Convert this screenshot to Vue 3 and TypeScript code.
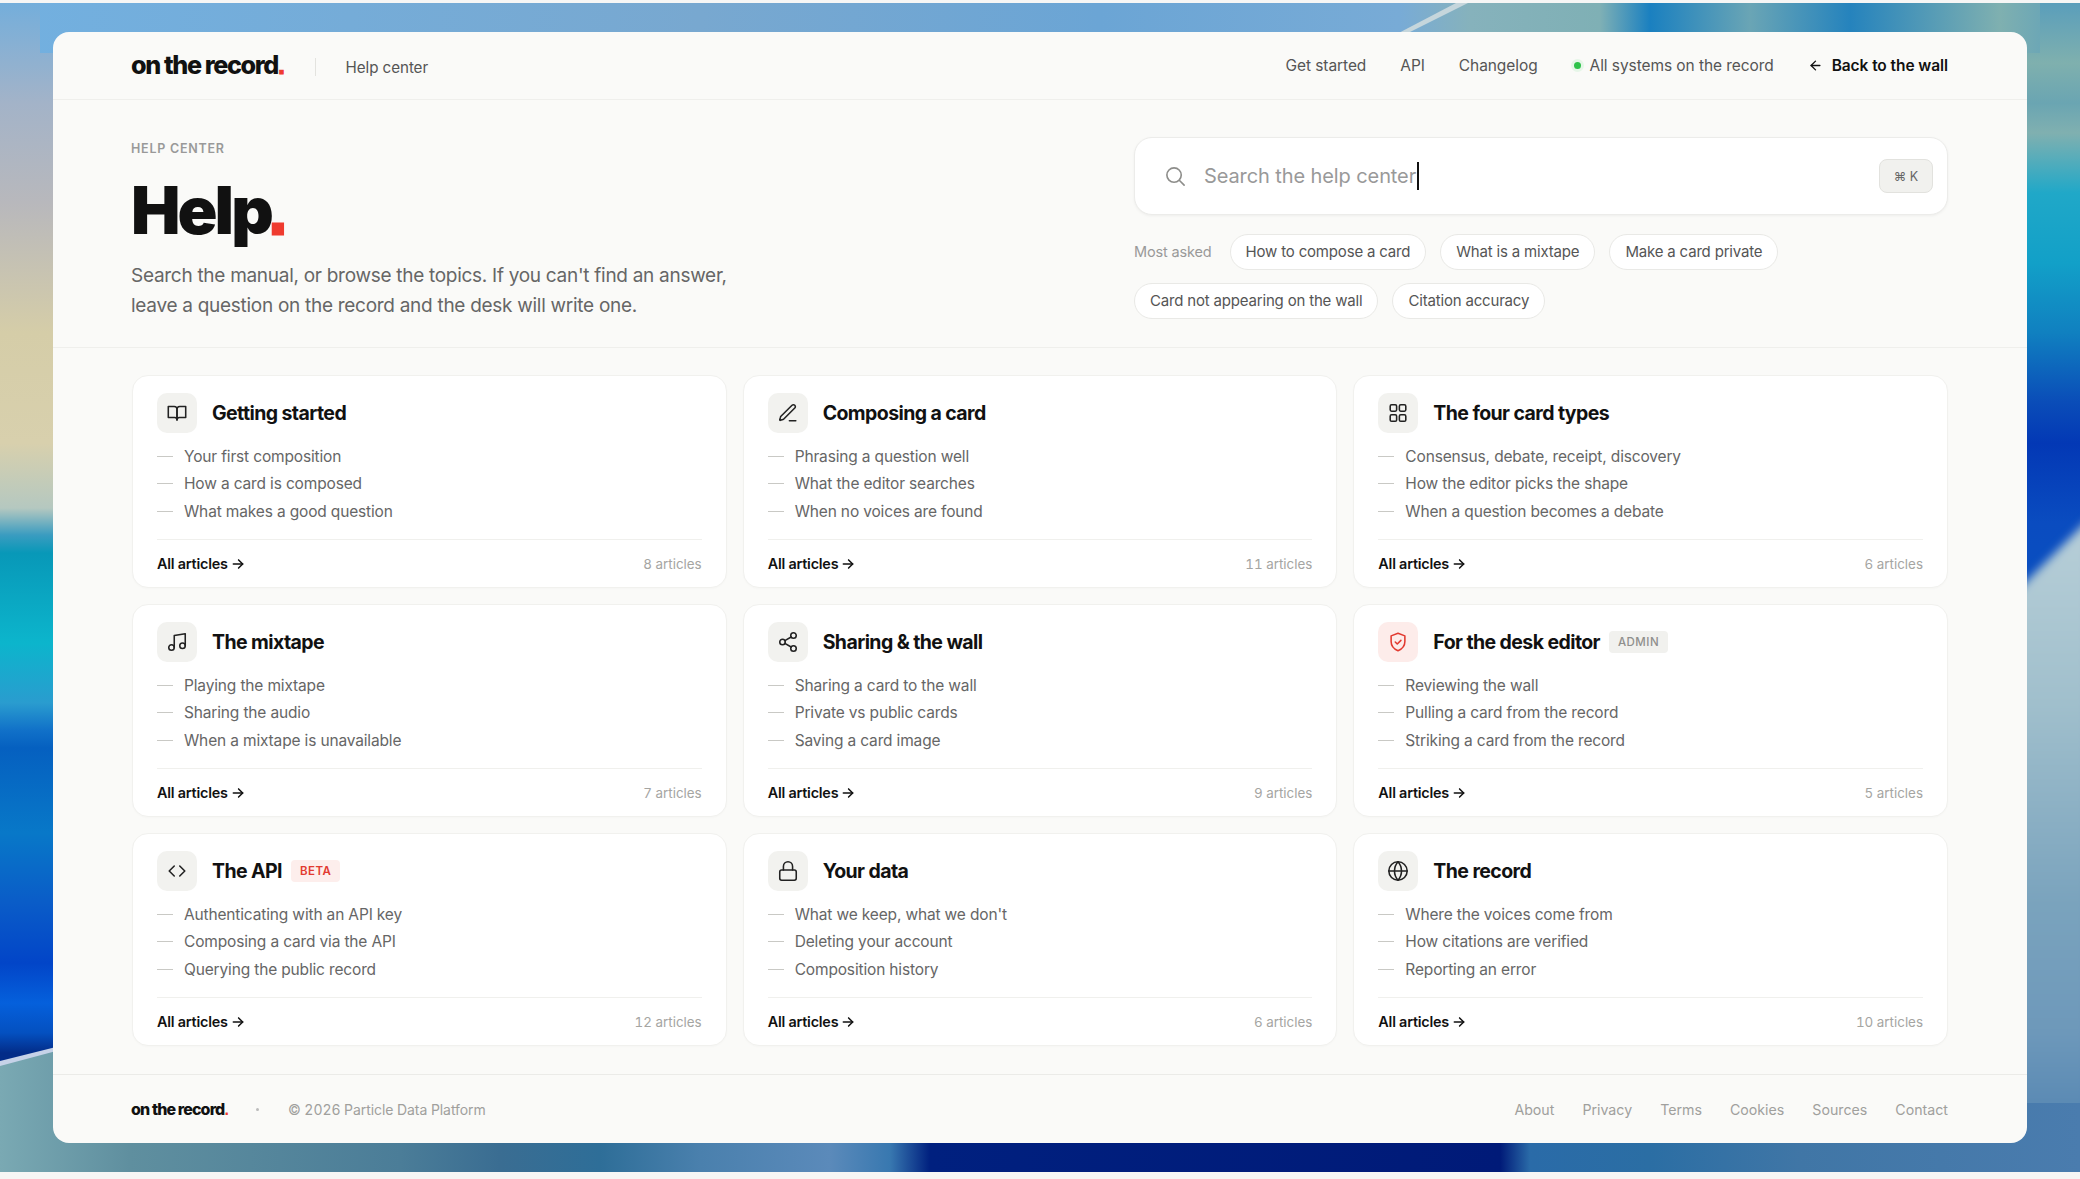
<script setup lang="ts">
interface Topic {
  title: string
  icon: string[]
  articles: string[]
  count: string
  badge?: 'beta' | 'admin'
  danger?: boolean
}

const navLinks = ['Get started', 'API', 'Changelog']
const chips = ['How to compose a card', 'What is a mixtape', 'Make a card private', 'Card not appearing on the wall', 'Citation accuracy']
const footerLinks = ['About', 'Privacy', 'Terms', 'Cookies', 'Sources', 'Contact']

const ring = (cx: number, cy: number, r: number) => `M${cx - r} ${cy}a${r} ${r} 0 1 0 ${r * 2} 0a${r} ${r} 0 1 0 ${-r * 2} 0`
const box = (x: number, y: number) => `M${x + 1.5} ${y}h4a1.5 1.5 0 0 1 1.5 1.5v4a1.5 1.5 0 0 1-1.5 1.5h-4a1.5 1.5 0 0 1-1.5-1.5v-4a1.5 1.5 0 0 1 1.5-1.5z`

const topics: Topic[] = [
  {
    title: 'Getting started',
    icon: ['M2.5 5h6.5a3 3 0 0 1 3 3v11.5a2.5 2.5 0 0 0-2.5-2.5H2.5z', 'M21.5 5H15a3 3 0 0 0-3 3v11.5a2.5 2.5 0 0 1 2.5-2.5h7z'],
    articles: ['Your first composition', 'How a card is composed', 'What makes a good question'],
    count: '8 articles',
  },
  {
    title: 'Composing a card',
    icon: ['M13.5 20.5h7', 'M16.4 3.6a2.1 2.1 0 0 1 3 3L7.4 18.6a2 2 0 0 1-.9.5l-2.9.9a.5.5 0 0 1-.6-.6l.8-2.9a2 2 0 0 1 .5-.9z'],
    articles: ['Phrasing a question well', 'What the editor searches', 'When no voices are found'],
    count: '11 articles',
  },
  {
    title: 'The four card types',
    icon: [box(3.5, 3), box(13.5, 3), box(3.5, 14), box(13.5, 14)],
    articles: ['Consensus, debate, receipt, discovery', 'How the editor picks the shape', 'When a question becomes a debate'],
    count: '6 articles',
  },
  {
    title: 'The mixtape',
    icon: ['M9 18V5l12-2v13', ring(6, 18, 3), ring(18, 16, 3)],
    articles: ['Playing the mixtape', 'Sharing the audio', 'When a mixtape is unavailable'],
    count: '7 articles',
  },
  {
    title: 'Sharing & the wall',
    icon: [ring(18, 5, 3), ring(6, 12, 3), ring(18, 19, 3), 'M8.6 13.5l6.8 4', 'M15.4 6.5l-6.8 4'],
    articles: ['Sharing a card to the wall', 'Private vs public cards', 'Saving a card image'],
    count: '9 articles',
  },
  {
    title: 'For the desk editor',
    icon: ['M12 2.5l7.5 2.8v6.2c0 4.6-3.1 8.2-7.5 10-4.4-1.8-7.5-5.4-7.5-10V5.3z', 'M9 12l2.2 2.2 4-4'],
    articles: ['Reviewing the wall', 'Pulling a card from the record', 'Striking a card from the record'],
    count: '5 articles',
    badge: 'admin',
    danger: true,
  },
  {
    title: 'The API',
    icon: ['M9 6.5L3.5 12 9 17.5', 'M15 6.5l5.5 5.5-5.5 5.5'],
    articles: ['Authenticating with an API key', 'Composing a card via the API', 'Querying the public record'],
    count: '12 articles',
    badge: 'beta',
  },
  {
    title: 'Your data',
    icon: ['M5 11h14a2 2 0 0 1 2 2v7a2 2 0 0 1-2 2H5a2 2 0 0 1-2-2v-7a2 2 0 0 1 2-2z', 'M7 11V7a5 5 0 0 1 10 0v4'],
    articles: ['What we keep, what we don\'t', 'Deleting your account', 'Composition history'],
    count: '6 articles',
  },
  {
    title: 'The record',
    icon: [ring(12, 12, 10), 'M2 12h20', 'M12 2a15 15 0 0 1 0 20a15 15 0 0 1 0-20'],
    articles: ['Where the voices come from', 'How citations are verified', 'Reporting an error'],
    count: '10 articles',
  },
]

const leftStops = [
  [0, '#74aedb'], [100, '#a3b3c8'], [200, '#b8b8bc'], [330, '#d5cda8'], [440, '#d8d0ad'], [505, '#b5c8c0'],
  [532, '#3a9cc0'], [550, '#0898b8'], [640, '#0cb5cc'], [700, '#2a9ccf'], [728, '#1070c8'], [745, '#0560c0'],
  [830, '#0878c8'], [900, '#0a5cc8'], [960, '#0245c8'], [1000, '#0560dc'], [1030, '#0450c0'], [1050, '#032c88'],
]
const rightStops = [
  [0, '#5a9ebb'], [60, '#7fb0ae'], [100, '#6aa5b2'], [130, '#80b0b0'], [190, '#20a8c8'], [260, '#12a0c8'],
  [330, '#1080c0'], [400, '#0a4cb8'], [440, '#0338b5'], [520, '#0a4cc0'], [620, '#0a50c0'],
]
const rightLowStops = [[515, '#b8cfd8'], [700, '#a0bfcc'], [900, '#7aa3bd'], [1030, '#6d98ba'], [1169, '#4a7dae']]
const topStops = [
  [0, '#72b0e0'], [700, '#78a8d0'], [1100, '#6ba5d5'], [1400, '#78abd6'], [1470, '#86b2bc'], [1600, '#7fb0b5'],
  [1650, '#1a80c0'], [1750, '#6aa5b5'], [1850, '#2583bd'], [2000, '#7fb0b0'], [2080, '#5a9ebb'],
]
const bottomStops = [
  [0, '#7aa9b3'], [130, '#5f8f9f'], [400, '#4b7d98'], [500, '#3a6d92'], [600, '#2e6e98'], [700, '#4a80ad'],
  [830, '#5b8aba'], [890, '#3878b0'], [930, '#00207f'], [1500, '#001a78'], [1530, '#2a6ba8'], [1650, '#2b6ea4'],
  [1800, '#4076a6'], [2080, '#4a7cae'],
]
</script>

<template>
  <div class="page">
    <svg class="wallpaper" width="2080" height="1169" viewBox="0 0 2080 1169" preserveAspectRatio="none">
      <defs>
        <linearGradient id="wp-left" gradientUnits="userSpaceOnUse" x1="0" y1="0" x2="0" y2="1169">
          <stop v-for="s in leftStops" :key="s[0]" :offset="Number(s[0]) / 1169" :stop-color="String(s[1])" />
        </linearGradient>
        <linearGradient id="wp-right" gradientUnits="userSpaceOnUse" x1="0" y1="0" x2="0" y2="1169">
          <stop v-for="s in rightStops" :key="s[0]" :offset="Number(s[0]) / 1169" :stop-color="String(s[1])" />
        </linearGradient>
        <linearGradient id="wp-right-low" gradientUnits="userSpaceOnUse" x1="0" y1="0" x2="0" y2="1169">
          <stop v-for="s in rightLowStops" :key="s[0]" :offset="Number(s[0]) / 1169" :stop-color="String(s[1])" />
        </linearGradient>
        <linearGradient id="wp-top" gradientUnits="userSpaceOnUse" x1="0" y1="0" x2="2080" y2="0">
          <stop v-for="s in topStops" :key="s[0]" :offset="Number(s[0]) / 2080" :stop-color="String(s[1])" />
        </linearGradient>
        <linearGradient id="wp-bottom" gradientUnits="userSpaceOnUse" x1="0" y1="0" x2="2080" y2="0">
          <stop v-for="s in bottomStops" :key="s[0]" :offset="Number(s[0]) / 2080" :stop-color="String(s[1])" />
        </linearGradient>
      </defs>
      <rect x="0" y="0" width="80" height="1169" fill="url(#wp-left)" />
      <rect x="2000" y="0" width="80" height="1169" fill="url(#wp-right)" />
      <polygon class="soft" points="2000,605 2090,515 2090,1179 2000,1179" fill="url(#wp-right-low)" />
      <rect x="40" y="0" width="2000" height="50" fill="url(#wp-top)" />
      <polygon points="0,1060 80,1040 80,1169 0,1169" fill="url(#wp-bottom)" />
      <rect x="40" y="1100" width="2040" height="69" fill="url(#wp-bottom)" />
      <polygon points="0,1058 60,1043 60,1047 0,1063" fill="#c6d2e8" />
      <polygon points="1391,34 1456,0 1468,0 1400,34" fill="#c5d6dc" />
    </svg>

    <div class="panel">
      <header class="topbar">
        <div class="topbar-left">
          <span class="logo">on the record<i>.</i></span>
          <span class="topbar-sep" />
          <span class="topbar-section">Help center</span>
        </div>
        <nav class="topnav">
          <a v-for="link in navLinks" :key="link">{{ link }}</a>
          <span class="status"><span class="status-dot" />All systems on the record</span>
          <a class="back">
            <svg width="15" height="15" viewBox="0 0 24 24" fill="none" stroke="currentColor" stroke-width="2.2" stroke-linecap="round" stroke-linejoin="round"><path d="M19 12H5" /><path d="M12 19l-7-7 7-7" /></svg>
            Back to the wall
          </a>
        </nav>
      </header>

      <section class="hero">
        <div class="hero-copy">
          <div class="eyebrow">HELP CENTER</div>
          <h1>Help<i>.</i></h1>
          <p>Search the manual, or browse the topics. If you can't find an answer,<br>leave a question on the record and the desk will write one.</p>
        </div>
        <div class="hero-search">
          <div class="searchbox">
            <svg class="search-icon" width="23" height="23" viewBox="0 0 24 24" fill="none" stroke="#8d8d8a" stroke-width="1.7" stroke-linecap="round"><circle cx="10.5" cy="10.5" r="7.5" /><path d="M16.2 16.2L21 21" /></svg>
            <span class="placeholder">Search the help center</span>
            <span class="caret" />
            <kbd>⌘ K</kbd>
          </div>
          <div class="chips">
            <span class="chips-label">Most asked</span>
            <a v-for="chip in chips" :key="chip" class="chip">{{ chip }}</a>
          </div>
        </div>
      </section>

      <section class="topics">
        <article v-for="topic in topics" :key="topic.title" class="card">
          <div class="card-head">
            <span class="card-icon" :class="{ danger: topic.danger }">
              <svg width="22" height="22" viewBox="0 0 24 24" fill="none" stroke="currentColor" stroke-width="1.7" stroke-linecap="round" stroke-linejoin="round">
                <path v-for="d in topic.icon" :key="d" :d="d" />
              </svg>
            </span>
            <h2>{{ topic.title }}</h2>
            <span v-if="topic.badge" class="badge" :class="topic.badge">{{ topic.badge.toUpperCase() }}</span>
          </div>
          <ul>
            <li v-for="item in topic.articles" :key="item">{{ item }}</li>
          </ul>
          <div class="card-foot">
            <a class="all">All articles
              <svg width="14" height="14" viewBox="0 0 24 24" fill="none" stroke="currentColor" stroke-width="2.6" stroke-linecap="round" stroke-linejoin="round"><path d="M4 12h16" /><path d="M13 5l7 7-7 7" /></svg>
            </a>
            <span class="count">{{ topic.count }}</span>
          </div>
        </article>
      </section>

      <footer class="footer">
        <div class="footer-left">
          <span class="logo small">on the record<i>.</i></span>
          <span class="footer-dot" />
          <span class="copyright">© 2026 Particle Data Platform</span>
        </div>
        <nav class="footer-links">
          <a v-for="link in footerLinks" :key="link">{{ link }}</a>
        </nav>
      </footer>
    </div>
  </div>
</template>

<style>
html, body {
  margin: 0;
  background: #f6f6f5;
}
</style>

<style scoped>
.page {
  position: relative;
  width: 2080px;
  height: 1179px;
  box-sizing: border-box;
  padding: 32px 53px 0;
  overflow: hidden;
  font-family: Inter, "Liberation Sans", sans-serif;
  color: #111;
}
.wallpaper {
  position: absolute;
  top: 3px;
  left: 0;
}
.soft { filter: blur(5px); }
.panel {
  position: relative;
  height: 1111px;
  display: flex;
  flex-direction: column;
  background: #fafaf8;
  border-radius: 16px;
}
i {
  font-style: normal;
  font-family: "Liberation Sans", sans-serif;
  font-weight: 700;
  color: #ef3b2f;
}
a { cursor: pointer; }

/* top bar */
.topbar {
  height: 68px;
  flex-shrink: 0;
  box-sizing: border-box;
  display: flex;
  align-items: center;
  justify-content: space-between;
  padding: 0 79px 0 78px;
  border-bottom: 1px solid #efefec;
}
.topbar-left { display: flex; align-items: center; }
.logo {
  font-size: 25.2px;
  font-weight: 800;
  letter-spacing: -0.055em;
  color: #111;
  margin-top: -2px;
}
.logo i { -webkit-text-stroke: 1px #ef3b2f; }
.logo.small { font-size: 16px; margin-top: 0; }
.logo.small i { -webkit-text-stroke: 0; }
.topbar-sep { width: 1px; height: 18px; background: #e3e3df; margin: 2px 30px 0 31px; }
.topbar-section { font-size: 15.2px; color: #555; letter-spacing: -0.005em; margin-top: 4px; }
.topnav {
  display: flex;
  align-items: center;
  gap: 34px;
  font-size: 15.5px;
  color: #555;
  letter-spacing: -0.005em;
}
.status { display: flex; align-items: center; gap: 9px; margin-left: 2px; }
.status-dot {
  width: 7px;
  height: 7px;
  border-radius: 50%;
  background: #2ec24a;
  box-shadow: 0 0 0 3px #e6f6e8;
}
.back {
  display: flex;
  align-items: center;
  gap: 9px;
  color: #111;
  font-weight: 600;
}

/* hero */
.hero {
  height: 248px;
  flex-shrink: 0;
  box-sizing: border-box;
  display: flex;
  justify-content: space-between;
  padding: 37px 79px 0 78px;
  border-bottom: 1px solid #efefec;
}
.eyebrow {
  margin-top: 4px;
  font-size: 12.5px;
  font-weight: 600;
  letter-spacing: 0.06em;
  color: #999;
  line-height: 16px;
}
h1 {
  margin: 13px 0 0;
  font-size: 66px;
  line-height: 80px;
  font-weight: 900;
  letter-spacing: -0.045em;
  color: #111;
}
h1 i {
  margin-left: -2px;
  -webkit-text-stroke: 3px #ef3b2f;
}
.hero-copy p {
  margin: 10px 0 0;
  font-size: 19px;
  line-height: 30px;
  letter-spacing: -0.015em;
  color: #666;
}
.hero-search { width: 814px; }
.searchbox {
  height: 78px;
  box-sizing: border-box;
  display: flex;
  align-items: center;
  padding: 0 14px 0 29px;
  background: #fff;
  border: 1px solid #ececea;
  border-radius: 18px;
  box-shadow: 0 1px 3px rgba(0, 0, 0, 0.05);
}
.search-icon { flex-shrink: 0; margin-right: 17px; }
.placeholder { font-size: 20px; color: #999; letter-spacing: -0.005em; }
.caret { width: 2px; height: 28px; background: #111; margin-left: 1px; }
kbd {
  margin-left: auto;
  width: 54px;
  height: 34px;
  box-sizing: border-box;
  display: flex;
  align-items: center;
  justify-content: center;
  font-family: inherit;
  font-size: 12.5px;
  color: #666;
  background: #f1f1ee;
  border: 1px solid #e2e2de;
  border-radius: 8px;
}
.chips {
  display: flex;
  flex-wrap: wrap;
  align-items: center;
  gap: 13px 14px;
  margin-top: 18.5px;
}
.chips-label { font-size: 14.5px; color: #999; letter-spacing: -0.01em; margin-right: 4px; }
.chip {
  height: 36px;
  box-sizing: border-box;
  display: flex;
  align-items: center;
  padding: 0 15px;
  font-size: 15px;
  letter-spacing: -0.012em;
  color: #555;
  background: #fff;
  border: 1px solid #e9e9e6;
  border-radius: 18px;
}

/* topics */
.topics {
  flex: 1;
  display: grid;
  grid-template-columns: repeat(3, 1fr);
  grid-auto-rows: 213px;
  gap: 16px;
  padding: 27px 79px 0 79px;
}
.card {
  box-sizing: border-box;
  display: flex;
  flex-direction: column;
  padding: 17px 24px 0;
  background: #fff;
  border: 1px solid #f1f1ee;
  border-radius: 16px;
  box-shadow: 0 1px 2px rgba(0, 0, 0, 0.02);
}
.card-head { display: flex; align-items: center; height: 40px; }
.card-icon {
  width: 40px;
  height: 40px;
  flex-shrink: 0;
  display: flex;
  align-items: center;
  justify-content: center;
  background: #f2f2ef;
  border-radius: 10px;
  color: #222;
}
.card-icon.danger { background: #fdecea; color: #e23a30; }
h2 {
  margin: 0 0 0 15px;
  font-size: 19.5px;
  font-weight: 700;
  letter-spacing: -0.03em;
  color: #111;
}
.badge {
  margin-left: 9px;
  height: 22px;
  box-sizing: border-box;
  display: flex;
  align-items: center;
  padding: 0 9px;
  border-radius: 4px;
  font-size: 11.5px;
  font-weight: 500;
  letter-spacing: 0.04em;
}
.badge.beta { background: #fdeeec; color: #e23a30; font-weight: 600; }
.badge.admin { background: #f1f1ee; color: #8f8f8c; }
ul {
  list-style: none;
  margin: 9.5px 0 0;
  padding: 0;
}
li {
  display: flex;
  align-items: center;
  height: 27.5px;
  font-size: 15.5px;
  letter-spacing: -0.01em;
  color: #666;
}
li::before {
  content: "";
  width: 16px;
  height: 1px;
  margin-right: 11px;
  background: #c9c9c5;
}
.card-foot {
  display: flex;
  align-items: center;
  justify-content: space-between;
  margin-top: 14px;
  height: 50px;
  border-top: 1px solid #f0f0ed;
}
.all {
  display: flex;
  align-items: center;
  gap: 3px;
  font-size: 14.4px;
  font-weight: 600;
  letter-spacing: -0.015em;
  color: #111;
}
.count {
  font-size: 13.4px;
  color: #a5a5a2;
  font-variant-numeric: tabular-nums;
}

/* footer */
.footer {
  height: 69px;
  flex-shrink: 0;
  box-sizing: border-box;
  display: flex;
  align-items: center;
  justify-content: space-between;
  padding: 0 79px 0 78px;
  border-top: 1px solid #ebebe8;
  font-size: 14.2px;
  color: #a0a09d;
}
.footer-left { display: flex; align-items: center; }
.footer-dot { width: 3px; height: 3px; border-radius: 50%; background: #bbb; margin: 0 29px 0 28px; }
.copyright { font-size: 14px; letter-spacing: -0.005em; font-variant-numeric: tabular-nums; }
.footer-links { display: flex; gap: 28px; }
</style>
